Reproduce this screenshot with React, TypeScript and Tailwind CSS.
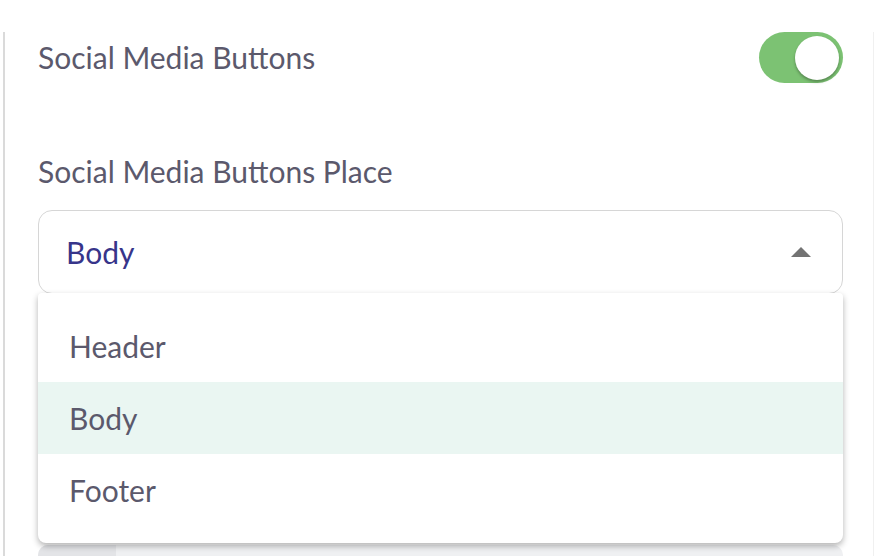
import React, { useState } from 'react';

const options = ['Header', 'Body', 'Footer'];

export default function App() {
  const [enabled, setEnabled] = useState(true);
  const [selected, setSelected] = useState('Body');

  return (
    <div className="h-[556px] w-[876px] overflow-hidden bg-white font-['Lato',sans-serif]">
      <div className="ml-[3px] mr-[2px] h-full border-l-2 border-r border-l-[#dadada] border-r-[#f0f0f0] pl-[33px] pr-[30px]">
        <div className="mt-[32px] flex h-[51px] items-center justify-between">
          <span className="text-[30px] text-[#5b596c]">Social Media Buttons</span>
          <button
            onClick={() => setEnabled(!enabled)}
            className={`flex h-[51px] w-[84px] items-center rounded-full px-[4px] ${enabled ? 'justify-end bg-[#7cc273]' : 'justify-start bg-[#d9d9d9]'}`}
          >
            <span className="h-[44px] w-[44px] rounded-full bg-white shadow-[0_2px_3px_rgba(0,0,0,0.3)]" />
          </button>
        </div>

        <div className="mt-[70px] text-[30px] leading-[36px] text-[#5b596c]">Social Media Buttons Place</div>

        <div className="relative mt-[21px]">
          <div className="flex h-[84px] items-center justify-between rounded-[14px] border-[1.5px] border-[#d6d6d6] pl-[27px] pr-[31px]">
            <span className="text-[30px] text-[#37358a]">{selected}</span>
            <svg width="20" height="10" viewBox="0 0 20 10">
              <path d="M0 10 L10 0 L20 10 Z" fill="#737373" />
            </svg>
          </div>
          <div className="absolute left-0 right-0 top-[83px] z-10 rounded-b-[8px] rounded-t-[4px] bg-white py-[17px] shadow-[0_3px_6px_rgba(0,0,0,0.3)]">
            {options.map((o) => (
              <div
                key={o}
                onClick={() => setSelected(o)}
                className={`flex h-[72px] items-center pl-[31px] text-[30px] text-[#5b596c] ${o === selected ? 'bg-[#eaf6f2]' : ''}`}
              >
                {o}
              </div>
            ))}
          </div>
        </div>

        <div className="mt-[251px] flex h-[40px] overflow-hidden rounded-t-[10px] bg-[#eff0f2]">
          <div className="w-[78px] bg-[#e3e4e7]" />
        </div>
      </div>
    </div>
  );
}
